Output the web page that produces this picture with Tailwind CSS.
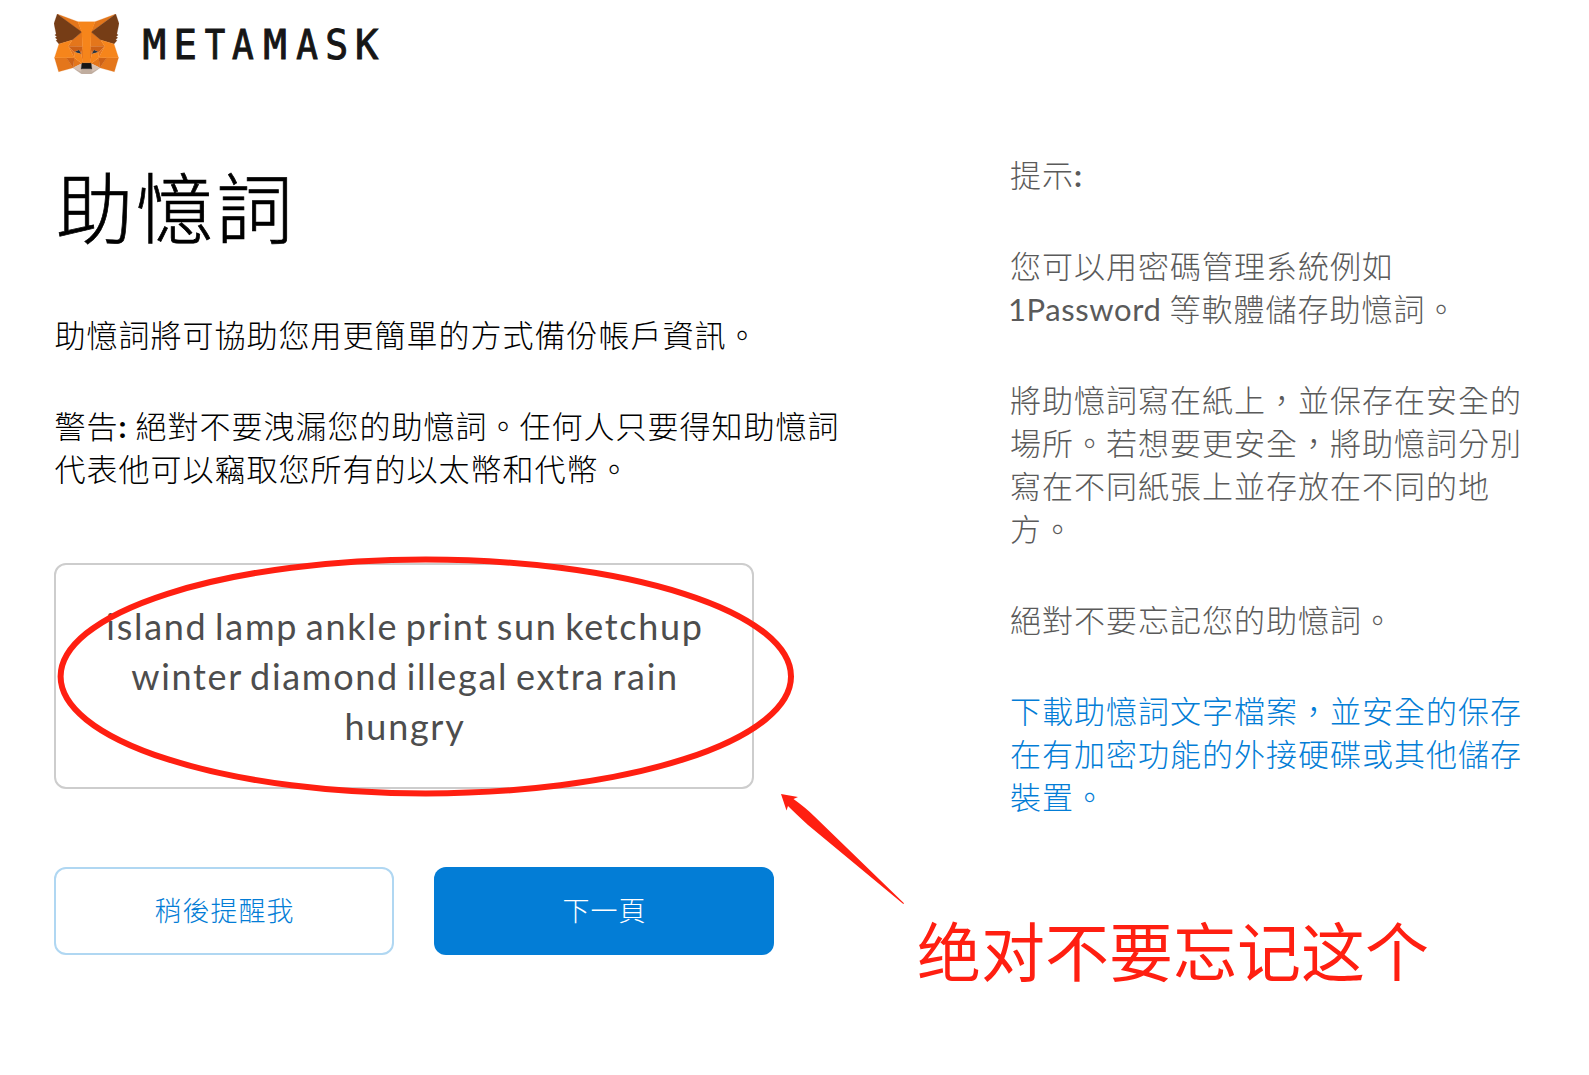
<!DOCTYPE html>
<html lang="zh-Hant">
<head>
<meta charset="utf-8">
<title>MetaMask</title>
<script src="https://cdn.jsdelivr.net/npm/@tailwindcss/browser@4"></script>
</head>
<body class="relative h-[1075px] w-[1589px] overflow-hidden bg-white font-['Lato','Noto_Sans_CJK_TC',sans-serif] font-light text-black">
  <header class="flex h-[74px] items-end pl-[54px]">
    <svg class="h-[60px] w-[65px]" viewBox="31.8 35.5 255 236.4" preserveAspectRatio="none" stroke-linejoin="round">
      <path fill="#E2761B" stroke="#E2761B" d="M274.1 35.5 174.6 109.4 193 65.8z"/>
      <path fill="#E4761B" stroke="#E4761B" d="M44.4 35.5 143.1 110.1 125.6 65.8zM238.3 206.8 211.8 247.4 268.5 263 284.8 207.7zM33.9 207.7 50.1 263 106.8 247.4 80.3 206.8zM103.6 138.2 87.8 162.1 144.1 164.6 142.1 104.1zM214.9 138.2 175.9 103.4 174.6 164.6 230.8 162.1zM106.8 247.4 140.6 230.9 111.4 208.1zM177.9 230.9 211.8 247.4 207.1 208.1z"/>
      <path fill="#D7C1B3" stroke="#D7C1B3" d="M211.8 247.4 177.9 230.9 180.6 253 180.3 262.3zM106.8 247.4 138.3 262.3 138.1 253 140.6 230.9z"/>
      <path fill="#233447" stroke="#233447" d="M138.8 193.5 110.6 185.2 130.5 176.1zM179.7 193.5 188 176.1 208 185.2z"/>
      <path fill="#CD6116" stroke="#CD6116" d="M106.8 247.4 111.6 206.8 80.3 207.7zM207 206.8 211.8 247.4 238.3 207.7zM230.8 162.1 174.6 164.6 179.8 193.5 188.1 176.1 208.1 185.2zM110.6 185.2 130.6 176.1 138.8 193.5 144.1 164.6 87.8 162.1z"/>
      <path fill="#E4751F" stroke="#E4751F" d="M87.8 162.1 111.4 208.1 110.6 185.2zM208.1 185.2 207.1 208.1 230.8 162.1zM144.1 164.6 138.8 193.5 145.4 227.6 146.9 182.7zM174.6 164.6 171.9 182.6 173.1 227.6 179.8 193.5z"/>
      <path fill="#F6851B" stroke="#F6851B" d="M179.8 193.5 173.1 227.6 177.9 230.9 207.1 208.1 208.1 185.2zM110.6 185.2 111.4 208.1 140.6 230.9 145.4 227.6 138.8 193.5z"/>
      <path fill="#C0AD9E" stroke="#C0AD9E" d="M180.3 262.3 180.6 253 178.1 250.8 140.4 250.8 138.1 253 138.3 262.3 106.8 247.4 117.8 256.4 140.1 271.9 178.4 271.9 200.8 256.4 211.8 247.4z"/>
      <path fill="#161616" stroke="#161616" d="M177.9 230.9 173.1 227.6 145.4 227.6 140.6 230.9 138.1 253 140.4 250.8 178.1 250.8 180.6 253z"/>
      <path fill="#763D16" stroke="#763D16" d="M278.3 114.2 286.8 73.4 274.1 35.5 177.9 106.9 214.9 138.2 267.2 153.5 278.8 140 273.8 136.4 281.8 129.1 275.6 124.3 283.6 118.2zM31.8 73.4 40.3 114.2 34.9 118.2 42.9 124.3 36.8 129.1 44.8 136.4 39.8 140 51.3 153.5 103.6 138.2 140.6 106.9 44.4 35.5z"/>
      <path fill="#F6851B" stroke="#F6851B" d="M267.2 153.5 214.9 138.2 230.8 162.1 207.1 208.1 238.3 207.7 284.8 207.7zM103.6 138.2 51.3 153.5 33.9 207.7 80.3 207.7 111.4 208.1 87.8 162.1zM174.6 164.6 177.9 106.9 193.1 65.8 125.6 65.8 140.6 106.9 144.1 164.6 145.3 182.8 145.4 227.6 173.1 227.6 173.3 182.8z"/>
    </svg>
    <svg class="h-[60px] w-[270px] font-['DejaVu_Sans_Mono',monospace] text-[40px] font-normal" viewBox="119 14 270 60" fill="#161616" stroke="#161616" stroke-width="1" text-anchor="middle">
      <text transform="translate(154.3 58.5) scale(.98 1)">M</text>
      <text transform="translate(185.3 58.5) scale(.97 1)">E</text>
      <text transform="translate(214.9 58.5) scale(.85 1)">T</text>
      <text transform="translate(242.9 58.5) scale(.9 1)">A</text>
      <text transform="translate(275 58.5) scale(.98 1)">M</text>
      <text transform="translate(307.2 58.5) scale(.9 1)">A</text>
      <text transform="translate(336.7 58.5) scale(.95 1)">S</text>
      <text transform="translate(366.6 58.5) scale(.97 1)">K</text>
    </svg>
  </header>

  <main class="flex pl-[54px]">
    <section class="w-[800px] shrink-0">
      <h1 class="mt-[84px] pl-[2px] text-[77px] leading-[100px] tracking-[3px] [-webkit-text-stroke:0.7px_black]">助憶詞</h1>
      <div class="mt-[56px] pl-[0.5px] text-[31px] leading-[43px] tracking-[1px]">
        <p>助憶詞將可協助您用更簡單的方式備份帳戶資訊。</p>
        <p class="mt-12 whitespace-nowrap [word-spacing:-1.5px]">警告<span class="font-bold">:</span> 絕對不要洩漏您的助憶詞。任何人只要得知助憶詞<br>代表他可以竊取您所有的以太幣和代幣。</p>
      </div>
      <div class="mt-[72px] h-[226px] w-[700px] rounded-xl border-2 border-[#cdcdcd] pl-[2px] pt-[36px] text-center text-[36px] font-normal leading-[50px] tracking-[1.7px] text-[#4d4d4d] [word-spacing:-3.2px]">
        island lamp ankle print sun ketchup<br>winter diamond illegal extra rain<br>hungry
      </div>
      <div class="mt-[78px] flex gap-10 text-[27px] tracking-[1px]">
        <button class="h-[88px] w-[340px] rounded-xl border-2 border-[#b0d7f2] pl-px text-[#037dd6]">稍後提醒我</button>
        <button class="h-[88px] w-[340px] rounded-xl bg-[#037dd6] pl-px text-white">下一頁</button>
      </div>
    </section>

    <aside class="ml-[156px] mt-[80px] flex flex-col gap-12 whitespace-nowrap text-[31px] leading-[43px] tracking-[1px] text-[#5a5a5a]">
      <p>提示<span class="font-bold">:</span></p>
      <p class="[word-spacing:-1.5px]">您可以用密碼管理系統例如<br><span class="-ml-[2px] font-normal tracking-[0.6px]">1Password</span> 等軟體儲存助憶詞。</p>
      <p>將助憶詞寫在紙上，並保存在安全的<br>場所。若想要更安全，將助憶詞分別<br>寫在不同紙張上並存放在不同的地<br>方。</p>
      <p>絕對不要忘記您的助憶詞。</p>
      <p class="text-[#037dd6]">下載助憶詞文字檔案，並安全的保存<br>在有加密功能的外接硬碟或其他儲存<br>裝置。</p>
    </aside>
  </main>

  <!-- hand-drawn annotation over the page -->
  <svg class="pointer-events-none absolute left-0 top-0 h-[1075px] w-[1589px]" viewBox="0 0 1589 1075">
    <ellipse cx="425.8" cy="676.5" rx="365.2" ry="117" fill="none" stroke="#ff1f11" stroke-width="6"/>
    <path fill="#ff1f11" d="M781 794 798 797 793.5 799Q806 808 814 816L904 903.3 903.3 904 808 825Q796 814 788 806L786.5 810.5z"/>
  </svg>
  <p class="absolute left-[917px] top-[902px] whitespace-nowrap font-['Noto_Sans_CJK_SC',sans-serif] text-[64px] font-normal leading-[93px] text-[#ff1f11]" lang="zh-Hans">绝对不要忘记这个</p>
</body>
</html>
